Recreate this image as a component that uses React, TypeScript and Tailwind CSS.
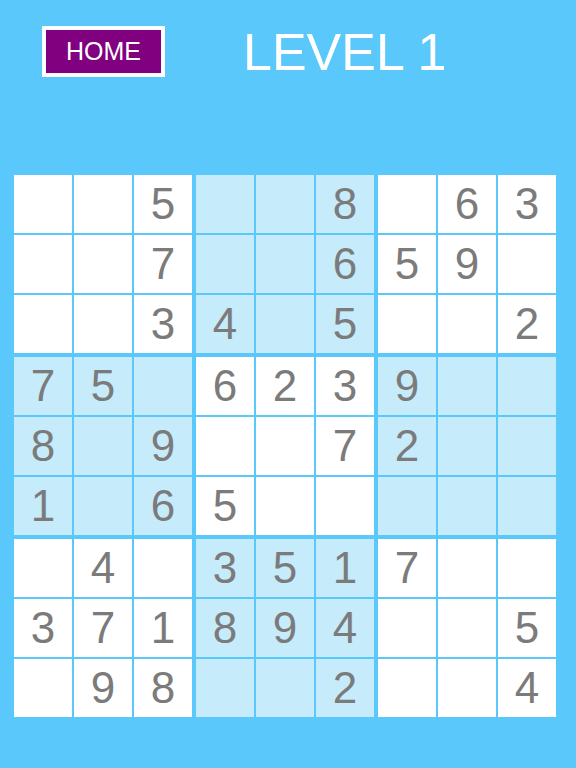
const board = [
  '005008063',
  '007006590',
  '003405002',
  '750623900',
  '809007200',
  '106500000',
  '040351700',
  '371894005',
  '098002004',
];

const shaded = (br: number, bc: number) => (br + bc) % 2 === 1;

function Box({ br, bc }: { br: number; bc: number }) {
  const cells = [];
  for (let r = 0; r < 3; r++) {
    for (let c = 0; c < 3; c++) {
      const v = board[br * 3 + r][bc * 3 + c];
      cells.push(
        <div
          key={`${r}-${c}`}
          className={`flex h-[58px] w-[58px] items-center justify-center text-[44px] leading-none text-[#7b7b7b] ${
            shaded(br, bc) ? 'bg-[#c6ebfb]' : 'bg-white'
          }`}
        >
          {v !== '0' ? v : ''}
        </div>
      );
    }
  }
  return <div className="grid grid-cols-3 gap-[2px]">{cells}</div>;
}

export default function App() {
  const boxes = [];
  for (let br = 0; br < 3; br++) {
    for (let bc = 0; bc < 3; bc++) {
      boxes.push(<Box key={`${br}-${bc}`} br={br} bc={bc} />);
    }
  }

  return (
    <div
      className="h-[768px] w-[576px] overflow-hidden bg-[#5ac8fa]"
      style={{ fontFamily: '"Liberation Sans", Arial, sans-serif' }}
    >
      <div className="flex h-[54px] items-start pl-[42px] pt-[26px] box-content">
        <button className="flex h-[51px] w-[123px] items-center justify-center border-4 border-white bg-[#800080] text-[25px] leading-none text-white">
          HOME
        </button>
        <h1 className="ml-[78px] text-[52px] leading-none text-white">LEVEL 1</h1>
      </div>

      <div className="ml-[14px] mt-[95px] grid w-[542px] grid-cols-3 gap-[4px]">
        {boxes}
      </div>
    </div>
  );
}
